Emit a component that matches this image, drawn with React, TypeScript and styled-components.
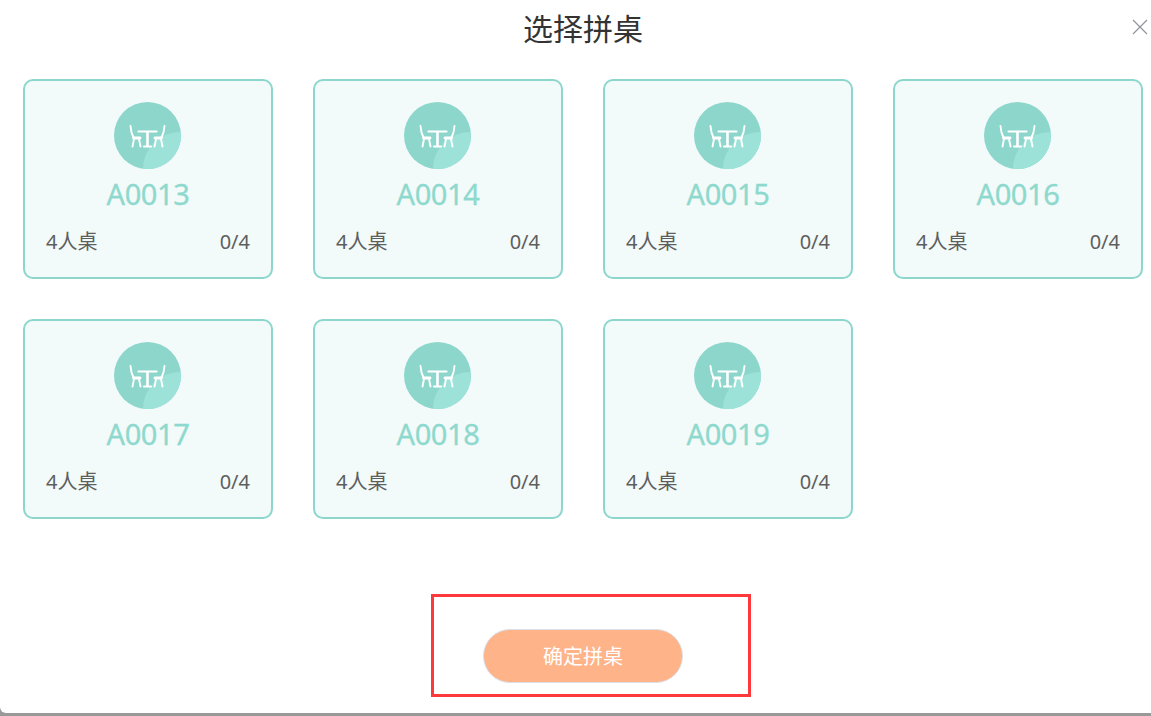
import React from "react";
import styled, { createGlobalStyle } from "styled-components";

const Global = createGlobalStyle`
  html, body { margin: 0; padding: 0; height: 716px; overflow: hidden; background: #999; }
  * { box-sizing: border-box; }
`;

const Modal = styled.div`
  position: relative;
  width: 1166px;
  height: 713px;
  background: #fff;
  border-radius: 0 0 6px 6px;
  font-family: "Noto Sans", "Noto Sans CJK SC", sans-serif;
`;

const Title = styled.h1`
  margin: 0;
  height: 59px;
  font: 400 30px/55px "Noto Sans CJK SC", sans-serif;
  color: #333;
  text-align: center;
`;

const Close = styled.button`
  position: absolute;
  top: 19px;
  left: 1132px;
  width: 16px;
  height: 16px;
  padding: 0;
  border: 0;
  background: none;
  color: #8f939c;
  display: block;
`;

const Grid = styled.div`
  display: grid;
  grid-template-columns: repeat(4, 250px);
  column-gap: 40px;
  row-gap: 40px;
  padding: 20px 23px 0;
`;

const Card = styled.div`
  height: 200px;
  border: 2px solid #8dd6cc;
  border-radius: 10px;
  background: #f2fafa;
  padding: 21px 21px 0;
  display: flex;
  flex-direction: column;
  align-items: center;
`;

const Avatar = styled.div`
  width: 67px;
  height: 67px;
  margin-right: 1px;
  border-radius: 50%;
  overflow: hidden;
  flex: none;
  svg { display: block; }
`;

const Code = styled.div`
  margin-top: 7px;
  height: 36px;
  font: 400 29px/36px "Noto Sans", sans-serif;
  letter-spacing: -0.4px;
  -webkit-text-stroke: 0.3px #8dd9cd;
  color: #8dd9cd;
`;

const Meta = styled.div`
  margin-top: 17px;
  width: 100%;
  display: flex;
  justify-content: space-between;
  font: 400 20px/26px "Noto Sans", "Noto Sans CJK SC", sans-serif;
  color: #5e5e5e;
`;

const Footer = styled.div`
  position: absolute;
  top: 629px;
  left: 0;
  width: 100%;
  display: flex;
  justify-content: center;
`;

const Confirm = styled.button`
  width: 200px;
  height: 54px;
  border-radius: 27px;
  border: 1px solid #dcdfe6;
  background: #ffb388;
  color: #fff;
  font: 400 20px/1 "Noto Sans CJK SC", sans-serif;
  padding: 0;
`;

const Annotation = styled.div`
  position: absolute;
  left: 431px;
  top: 594px;
  width: 320px;
  height: 103px;
  border: 3px solid #ff383c;
  pointer-events: none;
`;

const TableIcon = () => (
  <svg width="67" height="67" viewBox="0 0 67 67">
    <rect width="67" height="67" fill="#8dd6cc" />
    <circle cx="66" cy="67" r="37" fill="#9de2d9" />
    <g fill="none" stroke="#fff" strokeLinecap="round" strokeLinejoin="round">
      <path strokeWidth="1.9" d="M16.5 24 Q17 31 19.5 35.5" />
      <path strokeWidth="2.8" d="M19.5 36 H26" />
      <path strokeWidth="1.9" d="M20 37 L18.5 44.5 M25 37 L26.5 44.5" />
      <path strokeWidth="1.9" d="M50.5 24 Q50 31 47.5 35.5" />
      <path strokeWidth="2.8" d="M47.5 36 H41" />
      <path strokeWidth="1.9" d="M47 37 L48.5 44.5 M42 37 L40.5 44.5" />
      <path strokeWidth="2.2" d="M24.5 29.5 H42.5" />
      <path strokeWidth="2.6" d="M33.5 30 V44" />
      <path strokeWidth="2" d="M30 44.5 H37" />
    </g>
  </svg>
);

const tables = ["A0013", "A0014", "A0015", "A0016", "A0017", "A0018", "A0019"];

export default function App() {
  return (
    <>
      <Global />
      <Modal>
        <Title>选择拼桌</Title>
        <Close aria-label="关闭">
          <svg width="16" height="16" viewBox="0 0 16 16" stroke="currentColor" strokeWidth="1.2">
            <path d="M1 1 L15 15 M15 1 L1 15" />
          </svg>
        </Close>
        <Grid>
          {tables.map((code) => (
            <Card key={code}>
              <Avatar>
                <TableIcon />
              </Avatar>
              <Code>{code}</Code>
              <Meta>
                <span>4人桌</span>
                <span>0/4</span>
              </Meta>
            </Card>
          ))}
        </Grid>
        <Footer>
          <Confirm>确定拼桌</Confirm>
        </Footer>
        <Annotation />
      </Modal>
    </>
  );
}
